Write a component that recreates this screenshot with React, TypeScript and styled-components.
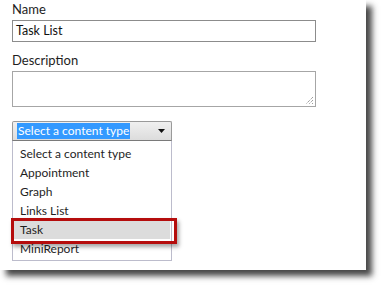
import styled, { createGlobalStyle } from 'styled-components';

const GlobalStyle = createGlobalStyle`
    html, body {
        margin: 0;
        padding: 0;
        background: #ffffff;
    }
    body {
        width: 381px;
        height: 286px;
        overflow: hidden;
        font-family: 'Lato', 'Open Sans', sans-serif;
    }
`;

const Page = styled.div`
    width: 366px;
    height: 270px;
    background: #ffffff;
    box-shadow: 6px 6px 6px rgba(40, 40, 40, 0.85);
    padding: 1px 0 0 12px;
    box-sizing: border-box;
    display: flex;
    flex-direction: column;
`;

const Label = styled.div`
    font-size: 13px;
    line-height: 17px;
    color: #1e1e1e;
    margin: 0 0 2px 0;
`;

const TextBox = styled.div`
    width: 304px;
    height: 22px;
    box-sizing: border-box;
    border: 1px solid #8c8c8c;
    font-size: 12.5px;
    line-height: 20px;
    padding-left: 3px;
    color: #111;
    margin-bottom: 10px;
`;

const TextArea = styled.div`
    position: relative;
    width: 304px;
    height: 36px;
    box-sizing: border-box;
    border: 1px solid #a6a6a6;
    margin-bottom: 14px;
`;

const Grip = styled.svg`
    position: absolute;
    right: 1px;
    bottom: 1px;
`;

const SelectBox = styled.div`
    width: 160px;
    height: 20px;
    box-sizing: border-box;
    border: 1px solid #9a9a9a;
    border-bottom-color: #7a7a7a;
    border-radius: 2px 2px 0 0;
    background: linear-gradient(#f0f0f0, #dcdcdc);
    display: flex;
    align-items: center;
    justify-content: space-between;
    padding: 0 5px 0 4px;
`;

const Selected = styled.span`
    background: #3399ff;
    color: #ffffff;
    font-size: 12px;
    line-height: 16px;
    padding: 0 1px;
`;

const List = styled.div`
    width: 160px;
    box-sizing: border-box;
    border: 1px solid #bcbccc;
    border-top: none;
    padding: 3px 1px 2px 1px;
`;

const Item = styled.div<{ $active?: boolean }>`
    position: relative;
    height: 19px;
    line-height: 19px;
    font-size: 12px;
    color: #1e1e1e;
    padding-left: 6px;
    background: ${p => (p.$active ? '#dcdcdc' : 'transparent')};
`;

const Marker = styled.div`
    position: absolute;
    left: -3px;
    top: -2px;
    width: 166px;
    height: 26px;
    box-sizing: border-box;
    border: 3px solid #b50d0d;
    box-shadow: 2px 3px 4px rgba(0, 0, 0, 0.35);
`;

const items = ['Select a content type', 'Appointment', 'Graph', 'Links List', 'Task', 'MiniReport'];

const App = () => (
    <>
        <GlobalStyle />
        <Page>
            <Label>Name</Label>
            <TextBox>Task List</TextBox>
            <Label>Description</Label>
            <TextArea>
                <Grip width="9" height="9" viewBox="0 0 9 9">
                    <path d="M8 1 L1 8 M8 4 L4 8 M8 7 L7 8" stroke="#777" strokeWidth="1" strokeDasharray="1 1" />
                </Grip>
            </TextArea>
            <SelectBox>
                <Selected>Select a content type</Selected>
                <svg width="8" height="5" viewBox="0 0 8 5">
                    <path d="M0 0 H7 L3.5 4 Z" fill="#111" />
                </svg>
            </SelectBox>
            <List>
                {items.map(it => (
                    <Item key={it} $active={it === 'Task'}>
                        {it}
                        {it === 'Task' && <Marker />}
                    </Item>
                ))}
            </List>
        </Page>
    </>
);

export default App;
